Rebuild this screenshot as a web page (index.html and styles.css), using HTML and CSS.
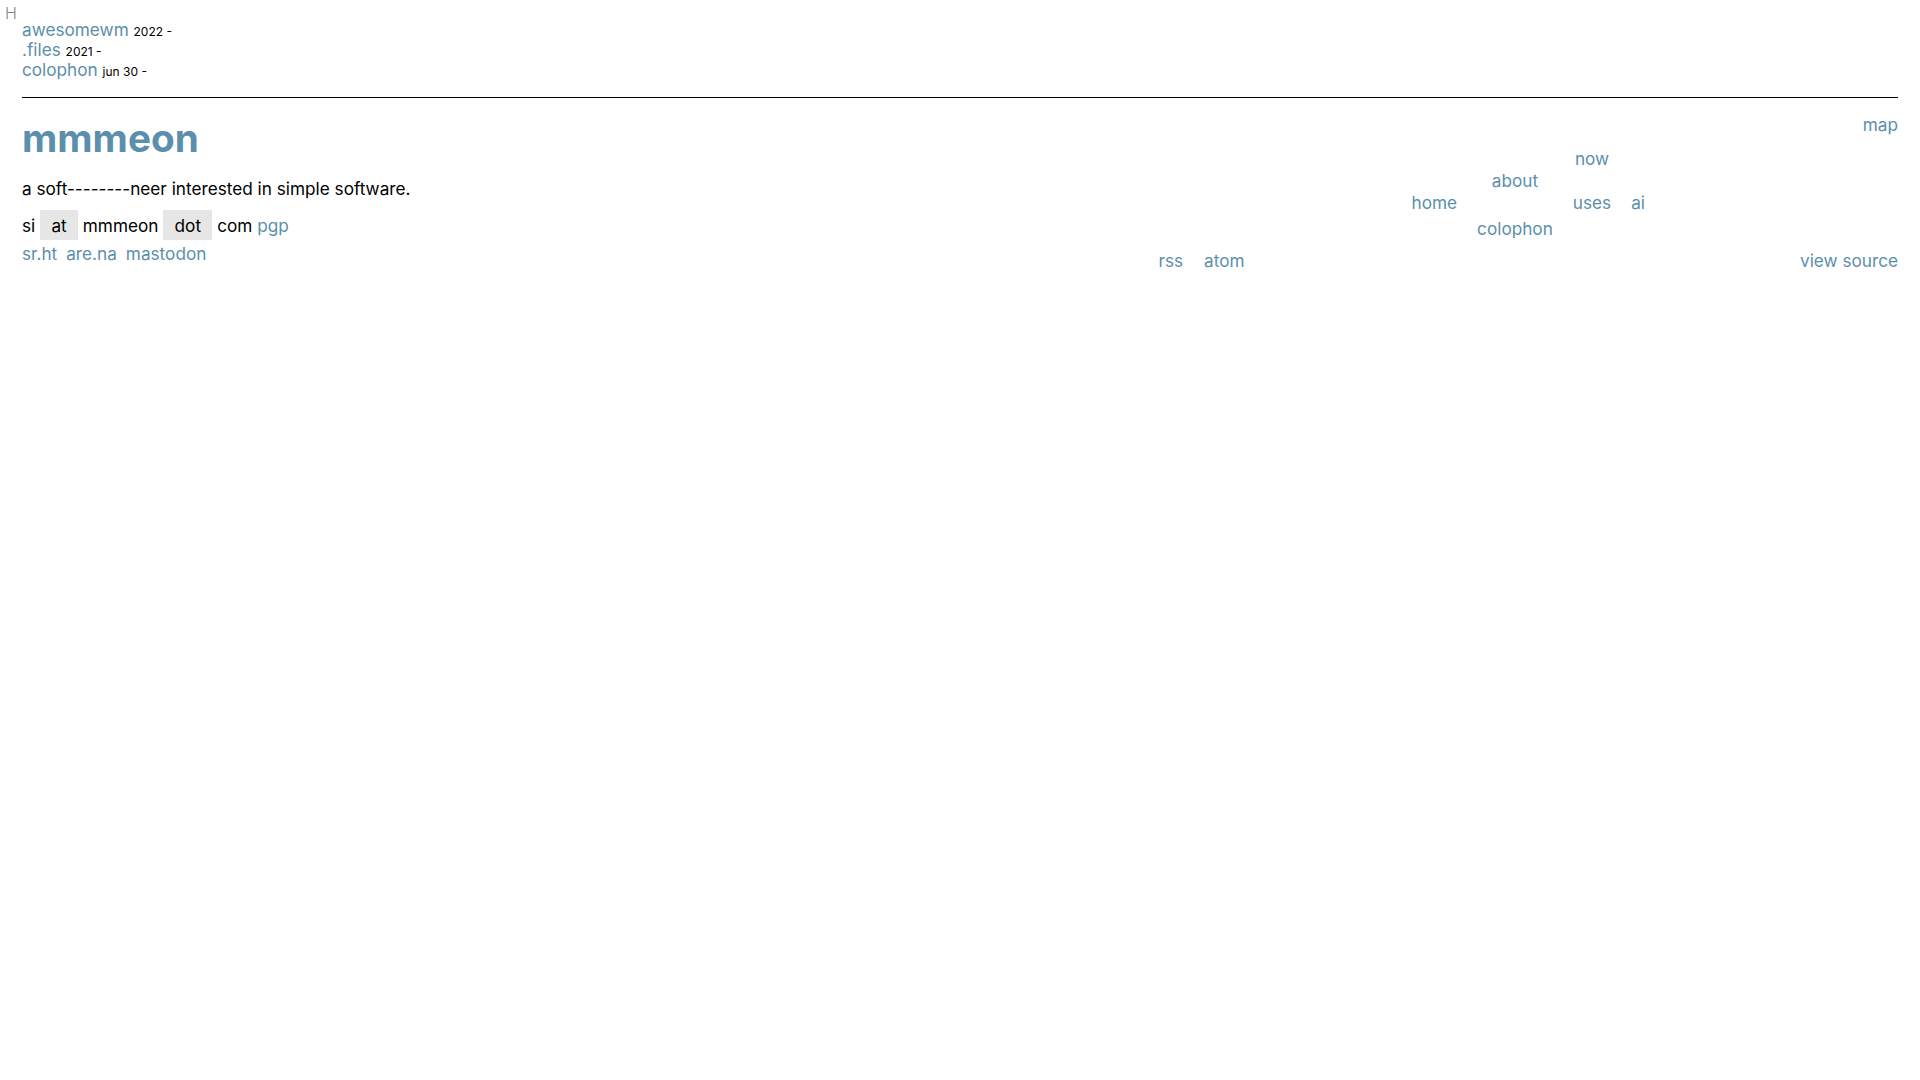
FILE: index.html
```html
<!DOCTYPE html>
<html lang="en">
<head>
<meta charset="utf-8">
<title>mmmeon</title>
<link rel="stylesheet" href="styles.css">
</head>
<body>
<div class="skip">H</div>
<ul class="recent">
  <li><a href="#">awesomewm</a> <small>2022 -</small></li>
  <li><a href="#">.files</a> <small>2021 -</small></li>
  <li><a href="#">colophon</a> <small>jun 30 -</small></li>
</ul>
<hr class="rule">
<header class="top">
  <div class="intro">
    <h1 class="title">mmmeon</h1>
    <p class="tagline">a soft--------neer interested in simple software.</p>
    <p class="email">si <span class="box">at</span> mmmeon <span class="box">dot</span> com <a href="#">pgp</a></p>
    <p class="social"><a href="#">sr.ht</a><a href="#">are.na</a><a href="#">mastodon</a></p>
  </div>
  <div class="feeds"><a href="#">rss</a><a href="#">atom</a></div>
  <nav class="sitemap">
    <a href="#" class="n-now">now</a>
    <a href="#" class="n-about">about</a>
    <a href="#" class="n-home">home</a>
    <a href="#" class="n-uses">uses</a>
    <a href="#" class="n-ai">ai</a>
    <a href="#" class="n-colophon">colophon</a>
  </nav>
  <div class="side">
    <a href="#">map</a>
    <a href="#">view source</a>
  </div>
</header>
</body>
</html>
```
FILE: styles.css
```css
html, body {
  background: #fff;
}
body {
  margin: 0;
  padding: 6px 22px 0 22px;
  font-family: Inter, "Noto Sans", sans-serif;
  font-size: 17.2px;
  line-height: 22px;
  color: #000;
}
a {
  color: #5b8fab;
  text-decoration: none;
}
.skip {
  margin-left: -17px;
  font-size: 16px;
  font-weight: 300;
  line-height: 14px;
  color: #888;
}
.recent {
  list-style: none;
  margin: 0;
  padding: 0;
  line-height: 19.8px;
}
.recent small {
  font-size: 12px;
  line-height: 1;
}
.rule {
  border: 0;
  border-top: 1px solid #000;
  margin: 17.6px 0 0 0;
  height: 0;
}
.top {
  display: flex;
}
.intro {
  flex: 1;
  margin-top: 16.5px;
  padding-bottom: 7px;
}
.title {
  margin: 0;
  font-size: 38.7px;
  line-height: 48px;
  font-weight: 700;
  color: #5b8fab;
}
.tagline {
  margin: 15.9px 0 0 0;
}
.email {
  margin: 14.5px 0 0 0;
}
.box {
  background: #e6e6e6;
  padding: 4.5px 11.3px;
}
.social {
  margin: 6.3px 0 0 0;
  display: flex;
  gap: 9px;
}
.feeds {
  align-self: flex-end;
  display: flex;
  gap: 21px;
  margin-right: 167px;
}
.sitemap {
  margin-top: 49.7px;
  margin-right: 155px;
  display: grid;
  grid-template-columns: auto auto auto auto;
  grid-template-rows: 22px 22px 22px 26px;
  column-gap: 20px;
  align-self: flex-start;
}
.sitemap a {
  justify-self: center;
}
.n-now { grid-column: 3; grid-row: 1; }
.n-about { grid-column: 2; grid-row: 2; }
.n-home { grid-column: 1; grid-row: 3; }
.n-uses { grid-column: 3; grid-row: 3; }
.n-ai { grid-column: 4; grid-row: 3; }
.n-colophon { grid-column: 2; grid-row: 4; align-self: end; }
.side {
  flex: none;
  white-space: nowrap;
  padding-top: 16.2px;
  display: flex;
  flex-direction: column;
  justify-content: space-between;
  align-items: flex-end;
}
```
